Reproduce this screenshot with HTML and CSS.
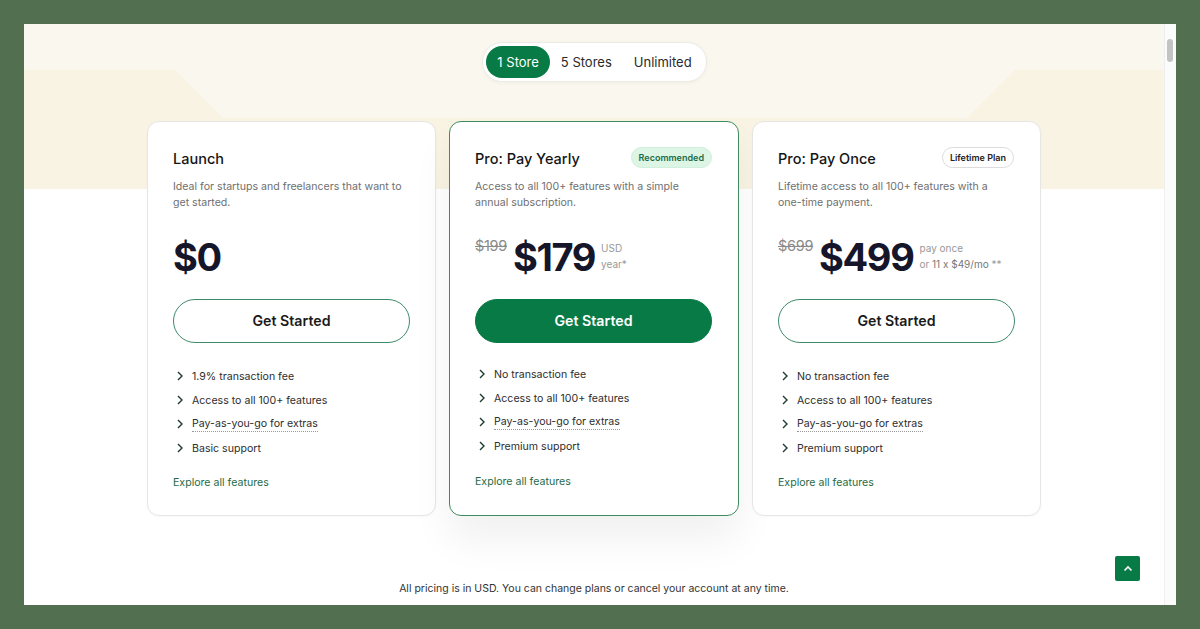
FILE: index.html
```html
<!DOCTYPE html>
<html>
<head>
<meta charset="utf-8">
<link rel="stylesheet" href="styles.css">
</head>
<body>
<div class="window">
  <div class="page">
    <div class="bg-band"></div>
    <div class="toggle-wrap">
      <div class="toggle">
        <span class="opt active">1 Store</span>
        <span class="opt">5 Stores</span>
        <span class="opt">Unlimited</span>
      </div>
    </div>
    <div class="cards">
      <div class="card">
        <div class="head"><h3>Launch</h3></div>
        <p class="desc">Ideal for startups and freelancers that want to get started.</p>
        <div class="price"><span class="amount">$0</span></div>
        <a class="btn">Get Started</a>
        <ul class="features">
          <li><svg viewBox="0 0 8 10"><polyline points="2,1 6,5 2,9"/></svg><span>1.9% transaction fee</span></li>
          <li><svg viewBox="0 0 8 10"><polyline points="2,1 6,5 2,9"/></svg><span>Access to all 100+ features</span></li>
          <li><svg viewBox="0 0 8 10"><polyline points="2,1 6,5 2,9"/></svg><span class="dotted">Pay-as-you-go for extras</span></li>
          <li><svg viewBox="0 0 8 10"><polyline points="2,1 6,5 2,9"/></svg><span>Basic support</span></li>
        </ul>
        <a class="explore">Explore all features</a>
      </div>
      <div class="card featured">
        <div class="head"><h3>Pro: Pay Yearly</h3><span class="badge green">Recommended</span></div>
        <p class="desc">Access to all 100+ features with a simple annual subscription.</p>
        <div class="price"><span class="old">$199</span><span class="amount">$179</span><span class="note"><span>USD</span><span>year*</span></span></div>
        <a class="btn solid">Get Started</a>
        <ul class="features">
          <li><svg viewBox="0 0 8 10"><polyline points="2,1 6,5 2,9"/></svg><span>No transaction fee</span></li>
          <li><svg viewBox="0 0 8 10"><polyline points="2,1 6,5 2,9"/></svg><span>Access to all 100+ features</span></li>
          <li><svg viewBox="0 0 8 10"><polyline points="2,1 6,5 2,9"/></svg><span class="dotted">Pay-as-you-go for extras</span></li>
          <li><svg viewBox="0 0 8 10"><polyline points="2,1 6,5 2,9"/></svg><span>Premium support</span></li>
        </ul>
        <a class="explore">Explore all features</a>
      </div>
      <div class="card">
        <div class="head"><h3>Pro: Pay Once</h3><span class="badge outline">Lifetime Plan</span></div>
        <p class="desc">Lifetime access to all 100+ features with a one-time payment.</p>
        <div class="price"><span class="old">$699</span><span class="amount">$499</span><span class="note"><span>pay once</span><span>or <b>11 x $49/mo</b> **</span></span></div>
        <a class="btn">Get Started</a>
        <ul class="features">
          <li><svg viewBox="0 0 8 10"><polyline points="2,1 6,5 2,9"/></svg><span>No transaction fee</span></li>
          <li><svg viewBox="0 0 8 10"><polyline points="2,1 6,5 2,9"/></svg><span>Access to all 100+ features</span></li>
          <li><svg viewBox="0 0 8 10"><polyline points="2,1 6,5 2,9"/></svg><span class="dotted">Pay-as-you-go for extras</span></li>
          <li><svg viewBox="0 0 8 10"><polyline points="2,1 6,5 2,9"/></svg><span>Premium support</span></li>
        </ul>
        <a class="explore">Explore all features</a>
      </div>
    </div>
    <p class="footnote">All pricing is in USD. You can change plans or cancel your account at any time.</p>
    <a class="to-top"><svg viewBox="0 0 12 12"><polyline points="2.5,7.5 6,4 9.5,7.5"/></svg></a>
  </div>
  <div class="scrollbar"><div class="thumb"></div></div>
</div>
</body>
</html>
```
FILE: styles.css
```css
* { box-sizing: border-box; }
html, body { margin: 0; padding: 0; }
body {
  background: #52704f;
  font-family: Inter, "Noto Sans", sans-serif;
  color: #1c1c1c;
  padding: 24px;
}
.window {
  width: 1152px;
  height: 581px;
  display: flex;
  background: #fff;
  overflow: hidden;
}
.page {
  position: relative;
  width: 1140px;
  height: 581px;
  background: linear-gradient(#faf8ee 0, #faf8ee 165px, #fff 165px);
  overflow: hidden;
}
.bg-band {
  position: absolute;
  left: 0; top: 46px;
  width: 1140px; height: 119px;
  background: #f8f3e3;
  clip-path: polygon(0 0, 151px 0, 199px 48px, 943px 48px, 991px 0, 100% 0, 100% 100%, 0 100%);
}
.toggle-wrap {
  position: relative;
  display: flex;
  justify-content: center;
  padding-top: 18px;
}
.toggle {
  display: flex;
  padding: 3px;
  background: #fff;
  border: 1px solid #ecebe4;
  border-radius: 20px;
  box-shadow: 0 1px 4px rgba(0,0,0,0.04);
  margin-left: 1px;
}
.opt {
  height: 32px;
  line-height: 32px;
  padding: 0 11px;
  font-size: 13px;
  color: #2a2a2a;
  border-radius: 16px;
}
.opt.active { background: #087a45; color: #fff; }
.cards {
  position: relative;
  display: flex;
  justify-content: center;
  gap: 13px;
  margin-top: 39px;
}
.card {
  width: 289px;
  height: 395px;
  background: #fff;
  border: 1px solid #e6e6e3;
  border-radius: 12px;
  padding: 25px 26px 0 25px;
  box-shadow: 0 1px 3px rgba(0,0,0,0.03);
}
.card.featured {
  width: 290px;
  border-color: #3f8a60;
  box-shadow: 0 24px 40px rgba(0,0,0,0.06);
}
.head {
  display: flex;
  align-items: center;
  justify-content: space-between;
  height: 22px;
}
h3 {
  margin: 0;
  font-size: 14.5px;
  font-weight: 500;
  color: #151515;
}
.badge {
  font-size: 9px;
  font-weight: 600;
  height: 21px;
  line-height: 19px;
  padding: 0 7px;
  border-radius: 11px;
  margin-top: -2px;
}
.badge.green { background: #dcf5e5; color: #1d6b45; border: 1px solid #d0efdc; }
.badge.outline { background: #fff; color: #222; border: 1px solid #dcdcdc; }
.desc {
  margin: 10px 0 0;
  font-size: 10.6px;
  line-height: 16px;
  color: #6f6f6f;
  width: 236px;
}
.price {
  display: flex;
  align-items: flex-start;
  height: 48px;
  margin-top: 22px;
}
.amount {
  font-family: Inter, "Noto Sans", sans-serif;
  font-size: 38px;
  font-weight: 700;
  line-height: 48px;
  color: #16162a;
  letter-spacing: -1.4px;
}
.old {
  font-size: 14.5px;
  color: #8a8a8a;
  text-decoration: line-through;
  margin-top: 4px;
  margin-right: 6px;
  letter-spacing: -0.3px;
}
.note {
  display: flex;
  flex-direction: column;
  font-size: 10px;
  line-height: 16px;
  color: #999;
  margin-left: 6px;
  margin-top: 7px;
}
.note b { font-weight: 400; color: #777; }
.btn {
  display: block;
  width: 237px;
  height: 44px;
  line-height: 41px;
  margin-top: 18px;
  text-align: center;
  border: 1.5px solid #3f8a6a;
  border-radius: 22px;
  font-size: 14.2px;
  font-weight: 600;
  color: #1a1a1a;
}
.btn.solid { background: #087a45; border-color: #087a45; color: #fff; }
.features {
  list-style: none;
  margin: 21px 0 0;
  padding: 0;
}
.featured .features { margin-top: 19px; }
.features li {
  display: flex;
  align-items: center;
  height: 24px;
  font-size: 10.6px;
  color: #2e2e2e;
}
.features svg {
  width: 8px;
  height: 10px;
  margin-left: 3px;
  margin-right: 8px;
  fill: none;
  stroke: #1e3b30;
  stroke-width: 1.4;
}
.dotted { border-bottom: 1px dotted #9a9a9a; line-height: 15px; }
.explore {
  display: block;
  margin-top: 15px;
  font-size: 10.6px;
  line-height: 16px;
  color: #1f6b47;
}
.featured .explore { margin-top: 16px; }
.footnote {
  position: relative;
  margin: 65px 0 0;
  text-align: center;
  font-size: 10.5px;
  line-height: 16px;
  color: #333;
}
.to-top {
  position: absolute;
  right: 24px;
  bottom: 24px;
  width: 25px;
  height: 25px;
  background: #087a45;
  border-radius: 2px;
  display: flex;
  align-items: center;
  justify-content: center;
}
.to-top svg { width: 12px; height: 12px; fill: none; stroke: #fff; stroke-width: 1.6; }
.scrollbar {
  width: 12px;
  height: 581px;
  background: #fbfbfb;
  border-left: 1px solid #efefef;
  padding-top: 15px;
}
.thumb {
  width: 6px;
  height: 23px;
  margin-left: 2px;
  background: #c3c3c3;
  border-radius: 3px;
}
```
